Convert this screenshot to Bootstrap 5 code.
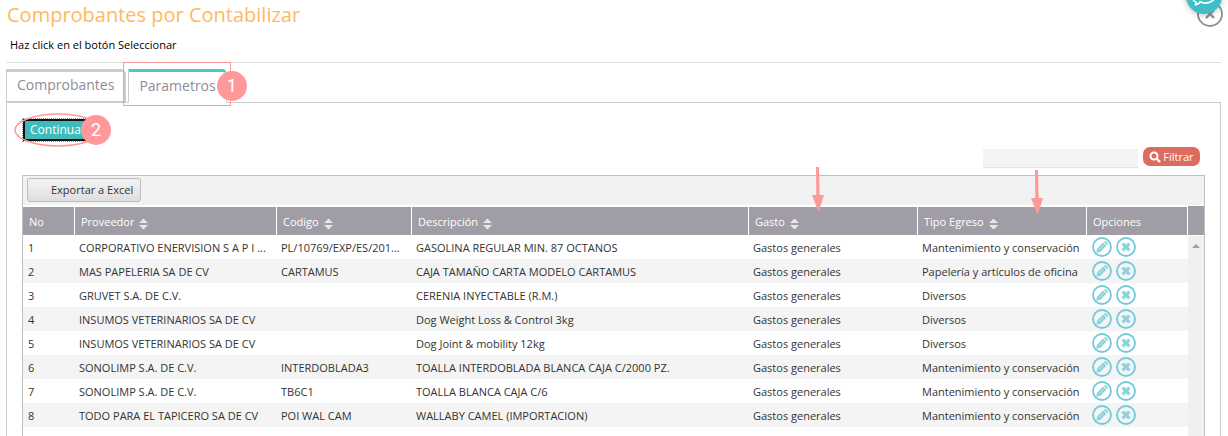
<!DOCTYPE html>
<html lang="es">
<head>
<meta charset="utf-8">
<meta name="viewport" content="width=device-width, initial-scale=1">
<title>Comprobantes por Contabilizar</title>
<link href="https://cdn.jsdelivr.net/npm/bootstrap@5.3.0/dist/css/bootstrap.min.css" rel="stylesheet">
<style>
  body { font-family: "Open Sans", sans-serif; font-size: 11px; line-height: 16px; color: #333; background: #fff; }
  .page { height: 100vh; padding: 0 7px 0 6px; overflow: hidden; }
  .page-title { font-size: 20px; line-height: 28px; font-weight: 400; color: #ffb95e; padding: 1px 1px 0; margin: 0; }
  .hint { color: #000; padding: 8px 4px 9px; margin: 0; border-bottom: 1px solid #e0e0e0; }
  .close-btn { right: 4px; top: 1px; width: 28px; height: 28px; z-index: 1; }
  .chat-btn { right: 6px; top: -22px; width: 36px; height: 36px; z-index: 2; background: #3ebfc5; border-radius: 50%; box-shadow: 0 1px 6px rgba(0,0,0,.25); }

  .tabs { padding-top: 6px; gap: 2px; position: relative; z-index: 1; margin-bottom: -1px; }
  .tab-btn { font-size: 14px; line-height: 20px; color: #8f8d98; background: #fff; border: 1px solid #ccc; border-top: 3px solid #ccc; border-radius: 0 5px 0 0; padding: 0 10px 3px; height: 34px; white-space: nowrap; }
  .tab-idle { border-right-width: 2px; border-bottom-width: 2px; }
  .tab-on { border-top-color: #55c4c2; border-bottom-color: #fff; }
  .mark-frame { left: -5px; top: -7px; right: -4px; bottom: -3px; border: 1px solid #ff9999; pointer-events: none; }
  .step { width: 30px; height: 30px; border-radius: 50%; background: #ff9999; color: #fff; font: 18px/30px Roboto, sans-serif; text-align: center; pointer-events: none; z-index: 3; }
  .step-tab { right: -20px; top: 2px; }
  .step-go { left: 59px; top: -3px; }

  .panel { border: 1px solid #ccc; border-bottom: 0; padding: 15px 15px 0; }
  .go-btn { width: 78px; height: 24px; font-size: 12px; line-height: 18px; font-weight: 500; color: #fff; background: #3ebbba; border: 1px dotted #3ebbba; background-clip: padding-box; box-shadow: inset 0 0 0 2px #111; padding: 0 0 1px 7px; text-align: left; }
  .oval { left: -8px; top: -5px; pointer-events: none; }
  .filter-row { padding: 5px 5px 7px; gap: 5px; }
  .filter-box { width: 155px; height: 19px; border: 0; border-bottom: 1px solid #e4e4e4; background: #f4f4f4; font-size: 11px; padding: 0 4px; margin-top: 2px; }
  .filter-btn { height: 19px; width: 57px; font-size: 11px; line-height: 17px; font-weight: 500; color: #fff; background: #dd6b5e; border: 0; border-radius: 7px; padding: 0; gap: 2px; }

  .data-box { border: 1px solid #c0c0c0; border-bottom: 0; min-height: 0; }
  .tools { background: #f2f2f2; border-bottom: 2px solid #fff; padding: 2px 4px; height: 31px; }
  .export-btn { height: 24px; font-size: 11px; line-height: 20px; color: #333; border: 1px solid #bbb; border-radius: 3px; background: linear-gradient(#f4f4f4, #dedede); padding: 0 7px 1px 23px; display: block; }
  .vouchers { table-layout: fixed; width: 100%; border-collapse: separate; border-spacing: 0; }
  .vouchers th { height: 28px; background: #a09da6; color: #fff; font-weight: 500; padding: 2px 6px 0; border-right: 1px solid #fff; position: relative; white-space: nowrap; }
  .vouchers td { height: 24px; line-height: 16px; padding: 1px 4px 0; white-space: nowrap; }
  .vouchers tbody tr:nth-child(even) td { background: #f4f4f4; }
  .vouchers td:first-child { padding-left: 5px; }
  .vouchers td.acts { padding: 0 0 0 5px; }
  .c-no { width: 52px; } .c-prov { width: 202px; } .c-cod { width: 135px; } .c-gasto { width: 169px; } .c-ops { width: 101px; }
  .sort { margin: 2px 0 0 2px; }
  .act { width: 20px; height: 20px; border: 0; background: none; padding: 0; display: block; }
  .arrow { top: -40px; pointer-events: none; z-index: 3; }
  .arrow-a { left: 63px; } .arrow-b { left: 113px; top: -37px; }
  .rail { width: 16px; background: #f0f0f0; }
  .rail-top { height: 30px; margin-top: -1px; background: #a09da6; border-bottom: 1px solid #fff; }
</style>
</head>
<body>
<svg class="d-none" aria-hidden="true">
  <symbol id="sort" viewBox="0 0 9 12"><path d="M4.500 .5 9 5H0zM4.500 11.500 0 7h9z" fill="#e8e8ea"/></symbol>
  <symbol id="edit" viewBox="0 0 20 20"><circle cx="10" cy="10" r="9" fill="none" stroke="#6fcbd9" stroke-width="1.800"/><path d="M4.300 15.700l.7-3.900 6.200-6.200 3.200 3.200-6.200 6.200zM11.800 5l.7-.7q.7-.6 1.400 0l1.800 1.800q.6.700 0 1.400l-.7.700z" fill="#8bd4df"/><path d="M7 12.700l4.600-4.600" stroke="#c9edf2" stroke-width=".7" fill="none"/></symbol>
  <symbol id="drop" viewBox="0 0 20 20"><circle cx="10" cy="10" r="9" fill="none" stroke="#6fcbd9" stroke-width="1.800"/><path d="M6.600 6.600l6.800 6.800M13.400 6.600l-6.800 6.800" stroke="#8bd4df" stroke-width="3.400"/></symbol>
  <symbol id="down" viewBox="0 0 12 46"><path d="M4 0h3l.7 28H12L6.500 45 0 28h4.300z" fill="#ff9999"/></symbol>
</svg>

<main class="page d-flex flex-column position-relative">
  <button class="close-btn position-absolute border-0 bg-transparent p-0" type="button" aria-label="Cerrar">
    <svg width="28" height="28" viewBox="0 0 28 28" class="d-block"><circle cx="14" cy="13" r="12" fill="#fff" stroke="#8f8d98" stroke-width="1.800"/><path d="M10 9l8 8M18 9l-8 8" stroke="#8f8d98" stroke-width="2.400"/></svg>
  </button>
  <button class="chat-btn position-absolute border-0 p-0" type="button" aria-label="Chat">
    <svg width="36" height="36" viewBox="0 0 36 36" class="d-block" fill="none" stroke="#fff" stroke-width="1.600" stroke-linejoin="round" stroke-linecap="round"><path d="M7 21q0 2 3 3l-.5 3 4-2M14 23.500q6 3.500 12-.5M26 23q2-1 2-2"/></svg>
  </button>

  <h1 class="page-title">Comprobantes por Contabilizar</h1>
  <p class="hint">Haz click en el botón Seleccionar</p>

  <div class="tabs d-flex" role="tablist">
    <button class="tab-btn tab-idle" type="button" role="tab" aria-selected="false">Comprobantes</button>
    <div class="position-relative">
      <button class="tab-btn tab-on d-block" type="button" role="tab" aria-selected="true">Parametros</button>
      <span class="mark-frame position-absolute"></span>
      <span class="step step-tab position-absolute">1</span>
    </div>
  </div>

  <section class="panel d-flex flex-column flex-grow-1">
    <div class="position-relative align-self-start">
      <button class="go-btn d-block" type="button">Continuar</button>
      <svg class="oval position-absolute" width="90" height="34" viewBox="0 0 90 34" aria-hidden="true"><ellipse cx="44" cy="17" rx="43" ry="16" fill="none" stroke="#ff9999" stroke-width="1.500"/></svg>
      <span class="step step-go position-absolute">2</span>
    </div>

    <form class="filter-row d-flex justify-content-end">
      <input class="filter-box" type="text" aria-label="Filtro">
      <button class="filter-btn d-flex align-items-center justify-content-center" type="button">
        <svg width="12" height="12" viewBox="0 0 12 12" fill="none" stroke="#fff" stroke-width="2"><circle cx="5" cy="5" r="3.500"/><path d="M7.500 7.500l3.500 3.500" stroke-width="2.400"/></svg>
        Filtrar
      </button>
    </form>

    <div class="data-box d-flex flex-column flex-grow-1">
      <div class="tools"><button class="export-btn" type="button">Exportar a Excel</button></div>
      <div class="d-flex flex-grow-1">
        <div class="flex-grow-1">
          <table class="vouchers">
            <colgroup><col class="c-no"><col class="c-prov"><col class="c-cod"><col><col class="c-gasto"><col class="c-gasto"><col class="c-ops"></colgroup>
            <thead>
              <tr>
                <th scope="col">No</th>
                <th scope="col">Proveedor <svg class="sort" width="9" height="12"><use href="#sort"/></svg></th>
                <th scope="col">Codigo <svg class="sort" width="9" height="12"><use href="#sort"/></svg></th>
                <th scope="col">Descripción <svg class="sort" width="9" height="12"><use href="#sort"/></svg></th>
                <th scope="col">Gasto <svg class="sort" width="9" height="12"><use href="#sort"/></svg><svg class="arrow arrow-a position-absolute" width="12" height="46"><use href="#down"/></svg></th>
                <th scope="col">Tipo Egreso <svg class="sort" width="9" height="12"><use href="#sort"/></svg><svg class="arrow arrow-b position-absolute" width="12" height="46"><use href="#down"/></svg></th>
                <th scope="col">Opciones</th>
              </tr>
            </thead>
            <tbody id="rows"></tbody>
          </table>
        </div>
        <div class="rail flex-shrink-0" aria-hidden="true">
          <div class="rail-top"></div>
          <svg class="d-block mx-auto mt-2" width="8" height="4" viewBox="0 0 8 4"><path d="M4 0l4 4H0z" fill="#a3a3a3"/></svg>
        </div>
      </div>
    </div>
  </section>
</main>

<script src="https://cdn.jsdelivr.net/npm/bootstrap@5.3.0/dist/js/bootstrap.bundle.min.js"></script>
<script>
  const data = [
    ["CORPORATIVO ENERVISION S A P I ...", "PL/10769/EXP/ES/201...", "GASOLINA REGULAR MIN. 87 OCTANOS", "Mantenimiento y conservación"],
    ["MAS PAPELERIA SA DE CV", "CARTAMUS", "CAJA TAMAÑO CARTA MODELO CARTAMUS", "Papelería y artículos de oficina"],
    ["GRUVET S.A. DE C.V.", "", "CERENIA INYECTABLE (R.M.)", "Diversos"],
    ["INSUMOS VETERINARIOS SA DE CV", "", "Dog Weight Loss & Control 3kg", "Diversos"],
    ["INSUMOS VETERINARIOS SA DE CV", "", "Dog Joint & mobility 12kg", "Diversos"],
    ["SONOLIMP S.A. DE C.V.", "INTERDOBLADA3", "TOALLA INTERDOBLADA BLANCA CAJA C/2000 PZ.", "Mantenimiento y conservación"],
    ["SONOLIMP S.A. DE C.V.", "TB6C1", "TOALLA BLANCA CAJA C/6", "Mantenimiento y conservación"],
    ["TODO PARA EL TAPICERO SA DE CV", "POI WAL CAM", "WALLABY CAMEL (IMPORTACION)", "Mantenimiento y conservación"]
  ];
  const body = document.getElementById("rows");
  data.forEach(([prov, cod, desc, tipo], i) => {
    const tr = body.insertRow();
    [i + 1, prov, cod, desc, "Gastos generales", tipo].forEach(t => { tr.insertCell().textContent = t; });
    const td = tr.insertCell();
    td.className = "acts";
    td.innerHTML = '<div class="d-flex gap-1">' +
      '<button class="act" type="button" aria-label="Editar"><svg class="d-block" width="20" height="20"><use href="#edit"/></svg></button>' +
      '<button class="act" type="button" aria-label="Eliminar"><svg class="d-block" width="20" height="20"><use href="#drop"/></svg></button></div>';
  });
</script>
</body>
</html>
